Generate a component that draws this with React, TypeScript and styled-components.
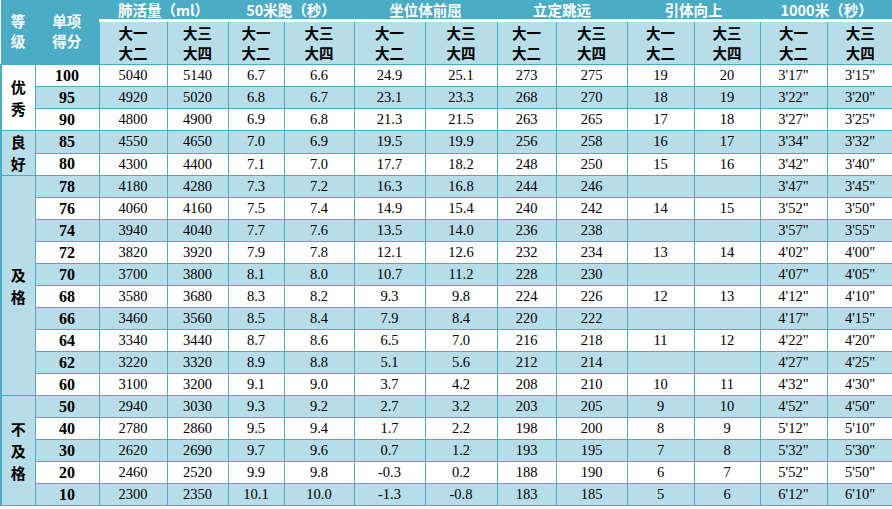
import styled, { createGlobalStyle } from "styled-components";

const GlobalStyle = createGlobalStyle`
  body {
    margin: 0;
    background: #ffffff;
  }
`;

const TEAL = "#4bacc6";
const LIGHT = "#b7dde8";

const Table = styled.table`
  width: 892px;
  table-layout: fixed;
  border-collapse: collapse;
  font-family: "Liberation Serif", "Noto Sans CJK SC", serif;
  color: #000;
`;

const CornerTh = styled.th`
  background: ${TEAL};
  color: #fff;
  font-family: "Noto Sans CJK SC", sans-serif;
  font-weight: 700;
  font-size: 14.5px;
  line-height: 20px;
  padding: 0 0 2px;
  border-bottom: 1px solid ${TEAL};
  vertical-align: middle;
`;

const GroupTh = styled.th`
  height: 19px;
  background: ${TEAL};
  color: #fff;
  font-family: "Noto Sans CJK SC", sans-serif;
  font-weight: 700;
  font-size: 14.5px;
  line-height: 19px;
  padding: 0;
  border-bottom: 3px solid #fff;
  white-space: nowrap;
`;

const SubTh = styled.th`
  height: 42px;
  background: ${LIGHT};
  font-family: "Noto Sans CJK SC", sans-serif;
  font-weight: 700;
  font-size: 14.5px;
  line-height: 20px;
  padding: 0;
  border-left: 1px solid ${TEAL};
  border-bottom: 1px solid ${TEAL};
`;

const Row = styled.tr<{ $alt: boolean }>`
  height: 22px;
  background: ${(p) => (p.$alt ? LIGHT : "#fff")};
`;

const GradeTd = styled.td<{ $blue: boolean }>`
  background: ${(p) => (p.$blue ? LIGHT : "#fff")};
  font-family: "Noto Sans CJK SC", sans-serif;
  font-weight: 700;
  font-size: 15px;
  line-height: 22px;
  text-align: center;
  padding: 0;
  border: 1px solid ${TEAL};
  border-left-width: 2px;
`;

const ScoreTd = styled.td`
  font-family: "Liberation Serif", serif;
  font-weight: 700;
  font-size: 16px;
  text-align: center;
  padding: 0;
  border: 1px solid ${TEAL};
`;

const ValueTd = styled.td`
  font-size: 14.5px;
  text-align: center;
  padding: 0;
  border: 1px solid ${TEAL};
`;

const widths = [34, 64, 68, 61, 56, 70, 71, 72, 59, 71, 67, 66, 67, 66];

const groups = ["肺活量（ml）", "50米跑（秒）", "坐位体前屈", "立定跳远", "引体向上", "1000米（秒）"];

const data: string[][] = [
  ["100", "5040", "5140", "6.7", "6.6", "24.9", "25.1", "273", "275", "19", "20", "3'17\"", "3'15\""],
  ["95", "4920", "5020", "6.8", "6.7", "23.1", "23.3", "268", "270", "18", "19", "3'22\"", "3'20\""],
  ["90", "4800", "4900", "6.9", "6.8", "21.3", "21.5", "263", "265", "17", "18", "3'27\"", "3'25\""],
  ["85", "4550", "4650", "7.0", "6.9", "19.5", "19.9", "256", "258", "16", "17", "3'34\"", "3'32\""],
  ["80", "4300", "4400", "7.1", "7.0", "17.7", "18.2", "248", "250", "15", "16", "3'42\"", "3'40\""],
  ["78", "4180", "4280", "7.3", "7.2", "16.3", "16.8", "244", "246", "", "", "3'47\"", "3'45\""],
  ["76", "4060", "4160", "7.5", "7.4", "14.9", "15.4", "240", "242", "14", "15", "3'52\"", "3'50\""],
  ["74", "3940", "4040", "7.7", "7.6", "13.5", "14.0", "236", "238", "", "", "3'57\"", "3'55\""],
  ["72", "3820", "3920", "7.9", "7.8", "12.1", "12.6", "232", "234", "13", "14", "4'02\"", "4'00\""],
  ["70", "3700", "3800", "8.1", "8.0", "10.7", "11.2", "228", "230", "", "", "4'07\"", "4'05\""],
  ["68", "3580", "3680", "8.3", "8.2", "9.3", "9.8", "224", "226", "12", "13", "4'12\"", "4'10\""],
  ["66", "3460", "3560", "8.5", "8.4", "7.9", "8.4", "220", "222", "", "", "4'17\"", "4'15\""],
  ["64", "3340", "3440", "8.7", "8.6", "6.5", "7.0", "216", "218", "11", "12", "4'22\"", "4'20\""],
  ["62", "3220", "3320", "8.9", "8.8", "5.1", "5.6", "212", "214", "", "", "4'27\"", "4'25\""],
  ["60", "3100", "3200", "9.1", "9.0", "3.7", "4.2", "208", "210", "10", "11", "4'32\"", "4'30\""],
  ["50", "2940", "3030", "9.3", "9.2", "2.7", "3.2", "203", "205", "9", "10", "4'52\"", "4'50\""],
  ["40", "2780", "2860", "9.5", "9.4", "1.7", "2.2", "198", "200", "8", "9", "5'12\"", "5'10\""],
  ["30", "2620", "2690", "9.7", "9.6", "0.7", "1.2", "193", "195", "7", "8", "5'32\"", "5'30\""],
  ["20", "2460", "2520", "9.9", "9.8", "-0.3", "0.2", "188", "190", "6", "7", "5'52\"", "5'50\""],
  ["10", "2300", "2350", "10.1", "10.0", "-1.3", "-0.8", "183", "185", "5", "6", "6'12\"", "6'10\""],
];

// grade label starts at these row indexes
const grades: Record<number, { chars: string[]; span: number; blue: boolean }> = {
  0: { chars: ["优", "秀"], span: 3, blue: false },
  3: { chars: ["良", "好"], span: 2, blue: true },
  5: { chars: ["及", "格"], span: 10, blue: true },
  15: { chars: ["不", "及", "格"], span: 5, blue: true },
};

const Lines = ({ items }: { items: string[] }) => (
  <>
    {items.map((c, i) => (
      <div key={i}>{c}</div>
    ))}
  </>
);

export default function App() {
  return (
    <>
      <GlobalStyle />
      <Table>
        <colgroup>
          {widths.map((w, i) => (
            <col key={i} style={{ width: w }} />
          ))}
        </colgroup>
        <thead>
          <tr>
            <CornerTh rowSpan={2}>
              <Lines items={["等", "级"]} />
            </CornerTh>
            <CornerTh rowSpan={2}>
              <Lines items={["单项", "得分"]} />
            </CornerTh>
            {groups.map((g) => (
              <GroupTh key={g} colSpan={2}>
                {g}
              </GroupTh>
            ))}
          </tr>
          <tr>
            {groups.map((g) => [
              <SubTh key={g + "a"}>
                <Lines items={["大一", "大二"]} />
              </SubTh>,
              <SubTh key={g + "b"}>
                <Lines items={["大三", "大四"]} />
              </SubTh>,
            ])}
          </tr>
        </thead>
        <tbody>
          {data.map((row, i) => {
            const g = grades[i];
            return (
              <Row key={row[0]} $alt={i % 2 === 1}>
                {g && (
                  <GradeTd rowSpan={g.span} $blue={g.blue}>
                    <Lines items={g.chars} />
                  </GradeTd>
                )}
                <ScoreTd>{row[0]}</ScoreTd>
                {row.slice(1).map((v, j) => (
                  <ValueTd key={j}>{v}</ValueTd>
                ))}
              </Row>
            );
          })}
        </tbody>
      </Table>
    </>
  );
}
